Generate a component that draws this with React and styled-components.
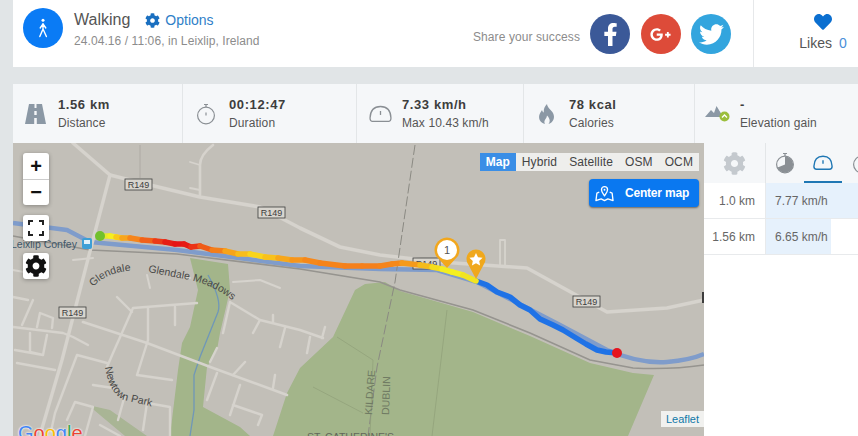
import React from "react";
import styled, { createGlobalStyle } from "styled-components";
import { FaCog, FaFacebookF, FaGooglePlusG, FaTwitter, FaHeart } from "react-icons/fa";

const Global = createGlobalStyle`
  html, body { margin: 0; padding: 0; background: #e1e5e7; overflow: hidden; }
  body { width: 858px; height: 436px; font-family: "Liberation Sans", Arial, sans-serif; color: #444; }
`;
const Page = styled.div`
  width: 845px; height: 436px; margin-left: 13px; display: flex; flex-direction: column; overflow: hidden;
`;
const Header = styled.header`
  height: 67px; flex: none; background: #fff; display: flex; align-items: stretch;
`;
const Activity = styled.div`
  flex: 1; display: flex; align-items: flex-start; padding: 8px 0 0 10px; gap: 11px;
`;
const RoundIcon = styled.div`
  width: 40px; height: 40px; border-radius: 50%; background: ${p => p.$bg}; color: #fff;
  display: flex; align-items: center; justify-content: center; flex: none; font-size: ${p => p.$size || 20}px;
`;
const TitleBlock = styled.div`display: flex; flex-direction: column; padding-top: 2px;`;
const TitleRow = styled.div`display: flex; align-items: center; gap: 15px; height: 20px;`;
const Title = styled.span`font-size: 16px; color: #555;`;
const Options = styled.span`
  font-size: 14px; color: #2f7fc8; display: flex; align-items: center; gap: 5px;
  svg { color: #1a6fc0; font-size: 15px; }
`;
const Meta = styled.div`font-size: 12px; color: #8c8c8c; margin-top: 4px; letter-spacing: .08px;`;
const Share = styled.div`display: flex; align-items: flex-start; padding-top: 14px; gap: 10px;`;
const ShareLabel = styled.span`font-size: 12px; color: #8c8c8c; letter-spacing: .09px; margin-top: 16px;`;
const Socials = styled.div`display: flex; gap: 10.5px;`;
const Likes = styled.div`
  width: 105px; margin-left: 22px; flex: none; border-left: 1px solid #e6e8ea; display: flex; flex-direction: column;
  align-items: center; padding: 13px 0 0 34px; box-sizing: border-box; font-size: 14px; color: #555;
  svg { color: #0b6fd0; font-size: 18px; }
`;
const LikesRow = styled.div`display: flex; gap: 7px; margin-top: 4px;`;
const LikesCount = styled.span`color: #4a90d9;`;
const Stats = styled.div`
  margin-top: 17px; height: 59px; flex: none; background: #f5f7f9; display: flex;
`;
const Stat = styled.div`
  width: ${p => p.$w}px; flex: none; box-sizing: border-box; border-right: ${p => p.$last ? "none" : "1px solid #e3e6e8"};
  display: flex; align-items: center; padding-left: ${p => p.$pad}px; gap: ${p => p.$gap}px;
`;
const StatIcon = styled.div`
  width: ${p => p.$w}px; display: flex; justify-content: center; flex: none;
`;
const StatText = styled.div`display: flex; flex-direction: column; gap: 4px; margin-top: 1px;`;
const StatValue = styled.div`font-size: 13px; font-weight: 700; color: #3d3d3d; letter-spacing: .6px; line-height: 15px;`;
const StatLabel = styled.div`font-size: 12px; color: #555; letter-spacing: .1px; line-height: 15px;`;
const Main = styled.div`flex: 1; display: flex; min-height: 0;`;
const MapArea = styled.div`
  position: relative; width: 691px; flex: none; height: 293px; overflow: hidden; background: #c2bfb8;
`;
const MapSvg = styled.svg`display: block; width: 691px; height: 293px;`;
const ControlGroup = styled.div`
  position: absolute; left: ${p => p.$x}px; top: ${p => p.$y}px; width: 26px; background: #fff; border-radius: 3px;
  box-shadow: 0 1px 4px rgba(0,0,0,.3); display: flex; flex-direction: column; color: #111;
`;
const ControlBtn = styled.div`
  height: 26px; display: flex; align-items: center; justify-content: center; font-size: ${p => p.$fs || 20}px; font-weight: 700;
  & + & { border-top: 1px solid #ccc; box-sizing: border-box; }
`;
const Layers = styled.div`
  position: absolute; right: 5px; top: 10px; height: 18px; display: flex; background: #eeeeec; font-size: 12px; color: #444;
`;
const Layer = styled.div`
  padding: 0 6px; display: flex; align-items: center; letter-spacing: .12px;
  ${p => p.$on && "background:#3a8ee6;color:#fff;font-weight:700;letter-spacing:0;"}
`;
const CenterBtn = styled.div`
  position: absolute; right: 5px; top: 36px; width: 110px; height: 28px; border-radius: 4px; background: #0a78f0;
  box-shadow: 0 1px 2px rgba(0,0,0,.45); color: #fff; font-size: 12px; font-weight: 700; display: flex; align-items: center;
  box-sizing: border-box; padding-left: 6px; gap: 11px; letter-spacing: -.2px;
`;
const Attribution = styled.div`
  position: absolute; right: 0; bottom: 9px; height: 16px; padding: 0 5px; background: #f1f1ef; color: #0f78a8; font-size: 11px;
  display: flex; align-items: center;
`;
const GoogleLogo = styled.div`
  position: absolute; left: 5px; top: 279px; line-height: 22px; font-size: 20px; text-shadow: 0 0 2px #fff, 0 0 2px #fff;
`;
const GoogleLetter = styled.span`color: ${p => p.$c};`;
const Side = styled.aside`flex: 1; background: #fff; overflow: hidden; display: flex; flex-direction: column;`;
const Tabs = styled.div`
  height: 40px; flex: none; background: #f5f7f9; display: flex; box-sizing: border-box;
`;
const GearTab = styled.div`
  width: 62px; flex: none; box-sizing: border-box; border-right: 1px solid #e3e6e8; display: flex; align-items: center; justify-content: center; color: #c4c9ce; font-size: 23px;
`;
const Tab = styled.div`
  width: ${p => p.$w}px; flex: none; display: flex; justify-content: center; align-items: flex-start; padding-top: ${p => p.$top}px; box-sizing: border-box;
  ${p => p.$on && "box-shadow: inset 0 -2px 0 #1f77b4;"}
`;
const Row = styled.div`display: flex; height: 36px; flex: none; box-sizing: border-box; border-bottom: 1px solid #e8eaec; font-size: 12px; color: #666;`;
const RowKey = styled.div`
  width: 62px; flex: none; box-sizing: border-box; border-right: 1px solid #e8eaec; padding-right: 10px; display: flex; align-items: center; justify-content: flex-end;
`;
const RowBarCell = styled.div`flex: 1;`;
const RowBar = styled.div`
  height: 100%; background: #e6f1fc; display: flex; align-items: center; padding-left: 9px; box-sizing: border-box; white-space: nowrap;
`;

const Walker = () => (
  <svg width="12" height="22" viewBox="0 0 12 22" fill="none" stroke="#fff" strokeLinecap="round">
    <circle cx="6" cy="3.2" r="1.5" fill="#fff" stroke="none" />
    <path d="M6 6.8 L3.2 11 M6 6.8 L8.8 11 M6 6.8 L6 12 L2.8 19.5 M6 12 L9.4 19.5" strokeWidth="1.4" />
  </svg>
);
const RoadIcon = () => (
  <svg width="21" height="20" viewBox="0 0 21 20">
    <path d="M4 0 H9.5 V4 H11.5 V0 H17 L21 20 H11.8 V14 H9.2 V20 H0 Z M9.3 7 V11 H11.7 V7 Z" fill="#8b98a5" fillRule="evenodd" />
  </svg>
);
const StopWatch = ({ fill }) => (
  <svg width="20" height="22" viewBox="0 0 20 22" fill="none" stroke="#8a8f94" strokeWidth="1.2">
    <circle cx="10" cy="12.5" r="8.4" />
    <path d="M8 1.5 H12 M10 1.5 V4" />
    {fill ? <path d="M10 12.5 V4.6 A8 8 0 1 1 2.6 15.5 Z" fill="#8a8f94" stroke="none" /> : <path d="M10 9.5 V12.5" />}
  </svg>
);
const Gauge = ({ color = "#8a8f94", w = 23, sw = 1.3 }) => (
  <svg width={w} height={w * 0.78} viewBox="0 0 23 18" fill="none" stroke={color} strokeWidth={sw}>
    <path d="M4 16.5 H19 Q22 16.5 22 13 Q21.5 1.5 11.5 1.5 Q1.5 1.5 1 13 Q1 16.5 4 16.5 Z" />
    <path d="M11.5 6 V10" />
  </svg>
);
const Flame = () => (
  <svg width="17" height="20" viewBox="0 0 17 20">
    <path fillRule="evenodd" fill="#8b98a5" d="M9 0 C9.5 4 13 5.5 15 9 C17.5 13.5 15 19 10.5 20 C12.5 17.5 12 14.5 9 11.5 C8.8 14 7 15 6.5 17 C6.2 18.3 6.5 19.3 7 20 C2.5 19 0 15 1.5 10.5 C2.2 8.5 3.3 7.5 4 6 C4.5 7.5 5 8.2 5.8 8.6 C5.5 5 6.5 2.5 9 0 Z" />
  </svg>
);
const Elevation = () => (
  <svg width="26" height="20" viewBox="0 0 26 20">
    <path d="M0 13 L6 6 L9 9 L11.5 2 L17 11 L16 13 Z" fill="#8b98a5" />
    <circle cx="19.5" cy="12.5" r="5" fill="#9bbe3c" />
    <path d="M17 13.5 L19.5 11 L22 13.5" stroke="#fff" strokeWidth="1.3" fill="none" />
  </svg>
);
const FullScreen = () => (
  <svg width="16" height="16" viewBox="0 0 16 16" fill="none" stroke="#222" strokeWidth="2">
    <path d="M1 5 V1 H5 M11 1 H15 V5 M15 11 V15 H11 M5 15 H1 V11" />
  </svg>
);
const MapOpen = () => (
  <svg width="19" height="17" viewBox="0 0 20 17" fill="none" stroke="#fff" strokeWidth="1.4" strokeLinejoin="round">
    <path d="M4.5 7 L2 8 L1 16 L6.5 14.2 L10 16 L13.5 14.2 L19 16 L18 8 L15.5 7" />
    <path d="M10 11 C8 8 6.8 6.5 6.8 4.5 A3.2 3.2 0 0 1 13.2 4.5 C13.2 6.5 12 8 10 11 Z" />
    <circle cx="10" cy="4.5" r="1" fill="#fff" stroke="none" />
  </svg>
);

const ROAD = "#d6d3cd";
const roadD = [
  [3.6, "M73 143 L110 175 L150 185 L200 197 L260 207 L300 228 L340 247 L380 255 L440 262 L527 268 L567 290 L607 312 L667 308 L704 300"],
  [3.4, "M110 175 L95 232 L80 290 L62 360 L43 425 L40 436"],
  [2.6, "M213 145 Q200 155 200 165 L200 195"],
  [2.6, "M83 322 L147 343 L213 368 L287 395"],
  [2.4, "M197 303 L133 308 L113 353 L107 367 M117 297 L132 312 M148 308 L148 340 L137 375 L172 380 M175 307 L175 325"],
  [2.4, "M13 327 L63 333 L73 337 L88 345 M33 300 L22 325 M13 297 L28 300 M37 327 L40 313 L53 318 L52 328"],
  [2.4, "M30 333 L30 352 L43 355 L47 335 M15 350 L43 355 M17 363 L55 370 M77 355 L107 363 M77 355 L55 413 L50 436"],
  [2.4, "M75 402 L67 420 M75 402 L93 407 L85 436 M93 385 L113 388 M147 403 L170 407 L170 436 M125 395 L118 420 M147 403 L143 430 M100 425 L120 436"],
  [2.4, "M230 302 L260 320 L300 330 L323 338 M230 302 L223 333 M260 320 L253 333 M285 328 L280 347 M273 315 L273 322 M310 337 L307 353 M325 327 L322 338"],
  [2.4, "M217 348 L210 362 M245 362 L233 375 M217 373 L207 400 M240 385 L230 415 M233 405 L262 415 L258 425 M275 375 L273 388"],
  [2, "M93 258 L73 260 M13 270 L40 275 M147 275 L150 288 M233 282 L260 280 L280 288 M175 275 L190 278"],
  [1.8, "M190 162 L200 165 M190 188 L200 190 M500 240 L505 240 L505 266 M500 240 L500 266"],
];
const route = [
  [100,236,"#d8e03a"],[110,236,"#e7ea2a"],[116,237,"#f6ef20"],[122,238,"#f9c91c"],[130,238,"#f8a51c"],[142,240,"#f6851b"],[155,241,"#f2611a"],
  [165,242,"#ec3a18"],[175,244,"#e71e14"],[184,244,"#e71414"],[191,247,"#e71a14"],[200,246,"#ec3316"],[212,250,"#f05c18"],[225,251,"#f47e1a"],
  [238,254,"#f7a41b"],[250,254,"#f8bd1b"],[265,257,"#f9d41b"],[278,258,"#f8c11b"],[292,260,"#f7a71b"],[305,260,"#f7951b"],[320,263,"#f6881b"],
  [345,266,"#f5831b"],[362,266,"#f5801b"],[380,266,"#f5801b"],[392,264,"#f5841b"],[402,263,"#f5881b"],[420,265,"#f59a1b"],[432,267,"#f4bb1b"],
  [442,269,"#f4dd1c"],[452,272,"#f3ee20"],[463,275,"#f5f020"],[476,281,"#f2e420"],
];
const blue = "M476 281 L487 285 L497 292 L510 297 L520 305 L530 310 L540 319 L553 325 L563 330 L576 338 L586 344 L597 350 L606 352 L617 353";
const Route = () => (
  <g>
    <path d={blue} fill="none" stroke="#1f72e6" strokeWidth="5.5" strokeLinecap="round" strokeLinejoin="round" />
    {route.slice(1).map((p, i) => (
      <line key={i} x1={route[i][0]} y1={route[i][1]} x2={p[0]} y2={p[1]} stroke={p[2]} strokeWidth="5.5" strokeLinecap="round" />
    ))}
  </g>
);
const RoadSign = ({ x, y }) => (
  <g>
    <rect x={x} y={y} width="27" height="11" fill="#d8d5ce" stroke="#3d3d3d" strokeWidth="0.8" />
    <text x={x + 13.5} y={y + 9} fontSize="9" fill="#3d3d3d" textAnchor="middle">R149</text>
  </g>
);

const MapView = () => (
  <MapSvg viewBox="13 143 691 293">
    <defs>
      <filter id="soft" x="-5%" y="-5%" width="110%" height="110%"><feGaussianBlur stdDeviation="0.5" /></filter>
      <path id="lblGlendale" d="M93 287 Q106 273 128 271" />
      <path id="lblMeadows" d="M148 272 L190 280 Q215 286 232 300" />
      <path id="lblNewtown" d="M105 367 Q109 393 124 400 L150 406" />
    </defs>
    <rect x="13" y="143" width="691" height="293" fill="#c2bfb8" />
    <g filter="url(#soft)">
      <path d="M355 290 L365 284 L385 282 L400 291 L473 312 L530 336 L590 363 L633 373 L654 375 L628 436 L273 436 L287 393 L300 368 L333 337 Z" fill="#a3b58a" />
      <path d="M190 258 L228 264 L230 290 L220 333 L217 350 L207 367 L203 407 L240 427 L250 436 L170 436 L178 370 L182 343 L190 327 L198 290 Z" fill="#a3b58a" />
      <path d="M88 405 L110 410 L147 436 L125 436 Z" fill="#a9b595" />
      <path d="M13 223 L67 230 L90 242 L177 250 L300 266 L380 269 L437 270 L477 282 L560 325 L607 350 Q640 364 667 362 Q690 360 704 354" fill="none" stroke="#7f9ccb" strokeWidth="4.5" strokeLinejoin="round" />
      <path d="M208 275 Q222 300 218 312 L200 357 L194 375 L194 410 L190 436" fill="none" stroke="#6f97b8" strokeWidth="1.3" />
      <path d="M13 236 L90 250 L177 254 L300 269 L380 282 L400 290 L473 310 L530 333 L590 360 L633 368 Q670 370 704 365" fill="none" stroke="#96948f" strokeWidth="1.6" />
      {roadD.map(([w, d], i) => (
        <path key={i} d={d} fill="none" stroke={ROAD} strokeWidth={w} strokeLinecap="round" strokeLinejoin="round" />
      ))}
      <path d="M415 145 L395 282 L377 367 L368 436" fill="none" stroke="#8a8982" strokeWidth="1" strokeDasharray="10 3" />
      <path d="M447 310 L432 436 M337 337 L373 360 L370 436 M313 387 L363 413" fill="none" stroke="#8f9f79" strokeWidth="0.7" />
      <path d="M140 145 L140 178" fill="none" stroke="#a8a59f" strokeWidth="0.8" />
    </g>
    <g fontSize="10.5" fill="#484846">
      <text x="11" y="248" fill="#40586a">Leixlip Confey</text>
      <text><textPath href="#lblGlendale">Glendale</textPath></text>
      <text><textPath href="#lblMeadows">Glendale Meadows</textPath></text>
      <text><textPath href="#lblNewtown">Newtown Park</textPath></text>
      <text x="372" y="415" transform="rotate(-86 372 415)" fill="#707b63">KILDARE</text>
      <text x="389" y="415" transform="rotate(-88 389 415)" fill="#707b63">DUBLIN</text>
      <text x="307" y="441" fill="#62675a">ST. CATHERINE'S</text>
    </g>
    <rect x="82" y="238" width="10" height="11" rx="2" fill="#3d9fd6" />
    <rect x="84" y="240" width="6" height="4" fill="#dff1fb" />
    <RoadSign x={125} y={179} />
    <RoadSign x={258} y={207} />
    <RoadSign x={59} y={307} />
    <RoadSign x={573} y={296} />
    <RoadSign x={413} y={258} />
    <rect x="702" y="292" width="3" height="11" fill="#3d3d3d" />
    <Route />
    <circle cx="100" cy="236" r="5" fill="#71c02c" />
    <circle cx="617" cy="353" r="5" fill="#e5141e" />
    <path d="M436 256 A12.5 12.5 0 1 1 458 256 L447 268 Z" fill="#f2a71d" />
    <circle cx="447" cy="250" r="10" fill="#fff" />
    <text x="447" y="254" fontSize="11" fill="#555" textAnchor="middle">1</text>
    <path d="M468 264 A9.5 9.5 0 1 1 484 264 L476 279 Z" fill="#f0a81c" />
    <path d="M476 253 L478 257.3 L482.6 257.8 L479.2 261 L480.1 265.5 L476 263.3 L471.9 265.5 L472.8 261 L469.4 257.8 L474 257.3 Z" fill="#fff" />
  </MapSvg>
);

const stats = [
  { w: 170, pad: 12, gap: 12, iw: 21, icon: <RoadIcon />, v: "1.56 km", l: "Distance" },
  { w: 174, pad: 13, gap: 13, iw: 20, icon: <StopWatch />, v: "00:12:47", l: "Duration" },
  { w: 167, pad: 11, gap: 10, iw: 24, icon: <Gauge />, v: "7.33 km/h", l: "Max 10.43 km/h" },
  { w: 171, pad: 14, gap: 14, iw: 17, icon: <Flame />, v: "78 kcal", l: "Calories" },
  { w: 163, pad: 10, gap: 9, iw: 26, icon: <Elevation />, v: "-", l: "Elevation gain", last: true },
];
const googleLetters = [["G", "#4285f4"], ["o", "#ea4335"], ["o", "#fbbc05"], ["g", "#4285f4"], ["l", "#34a853"], ["e", "#ea4335"]];
const rows = [
  { k: "1.0 km", v: "7.77 km/h", pct: 100 },
  { k: "1.56 km", v: "6.65 km/h", pct: 71 },
];

export default function App() {
  return (
    <>
      <Global />
      <Page>
        <Header>
          <Activity>
            <RoundIcon $bg="#0a7bf5"><Walker /></RoundIcon>
            <TitleBlock>
              <TitleRow><Title>Walking</Title><Options><FaCog />Options</Options></TitleRow>
              <Meta>24.04.16 / 11:06, in Leixlip, Ireland</Meta>
            </TitleBlock>
          </Activity>
          <Share>
            <ShareLabel>Share your success</ShareLabel>
            <Socials>
              <RoundIcon $bg="#3b5998" $size={23}><FaFacebookF /></RoundIcon>
              <RoundIcon $bg="#dd4b39" $size={21}><FaGooglePlusG /></RoundIcon>
              <RoundIcon $bg="#33a5de" $size={25}><FaTwitter /></RoundIcon>
            </Socials>
          </Share>
          <Likes><FaHeart /><LikesRow>Likes <LikesCount>0</LikesCount></LikesRow></Likes>
        </Header>
        <Stats>
          {stats.map(s => (
            <Stat key={s.l} $w={s.w} $pad={s.pad} $gap={s.gap} $last={s.last}>
              <StatIcon $w={s.iw}>{s.icon}</StatIcon>
              <StatText><StatValue>{s.v}</StatValue><StatLabel>{s.l}</StatLabel></StatText>
            </Stat>
          ))}
        </Stats>
        <Main>
          <MapArea>
            <MapView />
            <ControlGroup $x={10} $y={10}><ControlBtn>+</ControlBtn><ControlBtn>−</ControlBtn></ControlGroup>
            <ControlGroup $x={10} $y={72}><ControlBtn><FullScreen /></ControlBtn></ControlGroup>
            <ControlGroup $x={10} $y={110}><ControlBtn $fs={22}><FaCog /></ControlBtn></ControlGroup>
            <Layers>
              <Layer $on>Map</Layer><Layer>Hybrid</Layer><Layer>Satellite</Layer><Layer>OSM</Layer><Layer>OCM</Layer>
            </Layers>
            <CenterBtn><MapOpen />Center map</CenterBtn>
            <Attribution>Leaflet</Attribution>
            <GoogleLogo>
              {googleLetters.map(([l, c], i) => <GoogleLetter key={i} $c={c}>{l}</GoogleLetter>)}
            </GoogleLogo>
          </MapArea>
          <Side>
            <Tabs>
              <GearTab><FaCog /></GearTab>
              <Tab $w={38} $top={9}><StopWatch fill /></Tab>
              <Tab $w={38} $top={12} $on><Gauge color="#1f77b4" w={20} sw={1.6} /></Tab>
              <Tab $w={40} $top={9}><StopWatch /></Tab>
            </Tabs>
            {rows.map(r => (
              <Row key={r.k}>
                <RowKey>{r.k}</RowKey>
                <RowBarCell><RowBar style={{ width: `${r.pct}%` }}>{r.v}</RowBar></RowBarCell>
              </Row>
            ))}
          </Side>
        </Main>
      </Page>
    </>
  );
}
